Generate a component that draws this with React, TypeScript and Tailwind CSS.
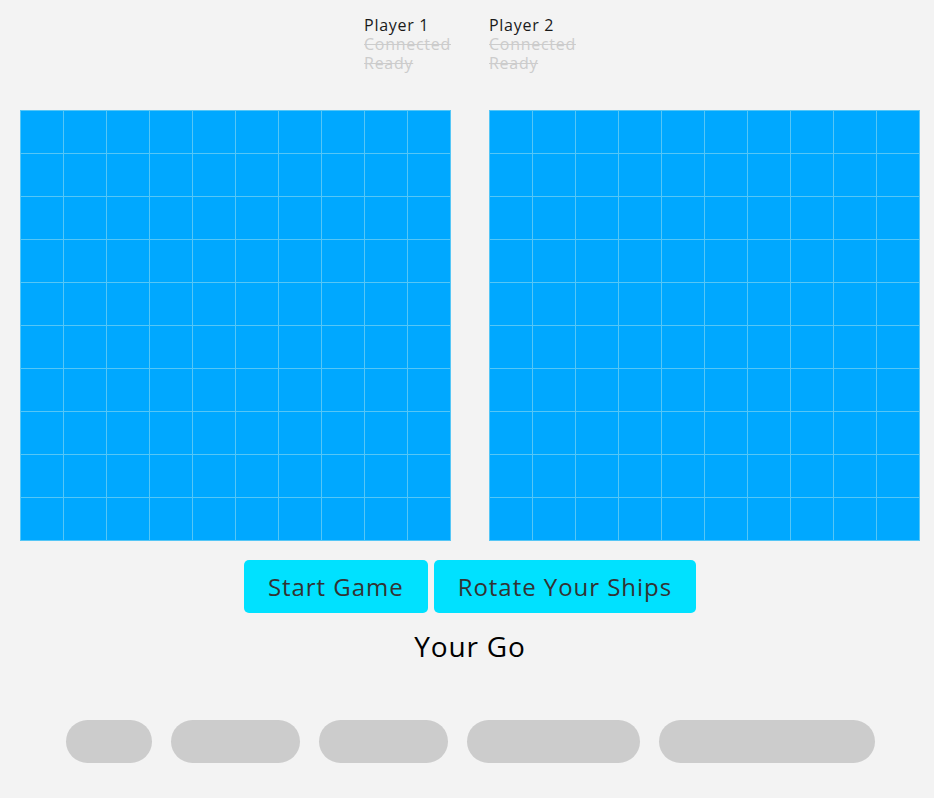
import React from "react";

const cells = Array.from({ length: 100 }, (_, i) => i);
const ships = [
  { name: "destroyer", w: "w-[86px]" },
  { name: "submarine", w: "w-[129px]" },
  { name: "cruiser", w: "w-[129px]" },
  { name: "battleship", w: "w-[173px]" },
  { name: "carrier", w: "w-[216px]" },
];

function Player({ label }: { label: string }) {
  return <div className="flex flex-col text-[16px] leading-[19px] tracking-[0.045em]">
      <span className="text-[#1a1a1a]">{label}</span>
      <span className="text-[#cccccc] line-through">Connected</span>
      <span className="text-[#cccccc] line-through">Ready</span>
    </div>;
}

function Grid() {
  return <div className="grid grid-cols-[repeat(10,42px)] gap-px p-px bg-[#55c6f6]">
      {cells.map(c => <div key={c} className="h-[42px] w-[42px] bg-[#00a8ff]" />)}
    </div>;
}

export default function App() {
  return <div className="min-h-screen bg-[#f3f3f3] pl-[6px] text-black" style={{ fontFamily: '"Open Sans", "Noto Sans", sans-serif' }}>
      <div className="flex justify-center gap-[38px] pt-[16px]">
        <Player label="Player 1" />
        <Player label="Player 2" />
      </div>
      <div className="flex justify-center gap-[38px] mt-[37px]">
        <Grid />
        <Grid />
      </div>
      <div className="flex justify-center gap-[6px] mt-[19px]">
        <button className="h-[53px] px-[24px] rounded-[5px] bg-[#00e1ff] text-[24px] tracking-[0.04em] text-[#333]">Start Game</button>
        <button className="h-[53px] px-[24px] rounded-[5px] bg-[#00e1ff] text-[24px] tracking-[0.04em] text-[#333]">Rotate Your Ships</button>
      </div>
      <div className="text-center text-[28px] leading-[34px] tracking-[0.03em] mt-[16px]">Your Go</div>
      <div className="flex justify-center gap-[19px] mt-[57px]">
        {ships.map(s => <div key={s.name} className={`${s.w} h-[43px] rounded-full bg-[#cccccc]`} />)}
      </div>
    </div>;
}
